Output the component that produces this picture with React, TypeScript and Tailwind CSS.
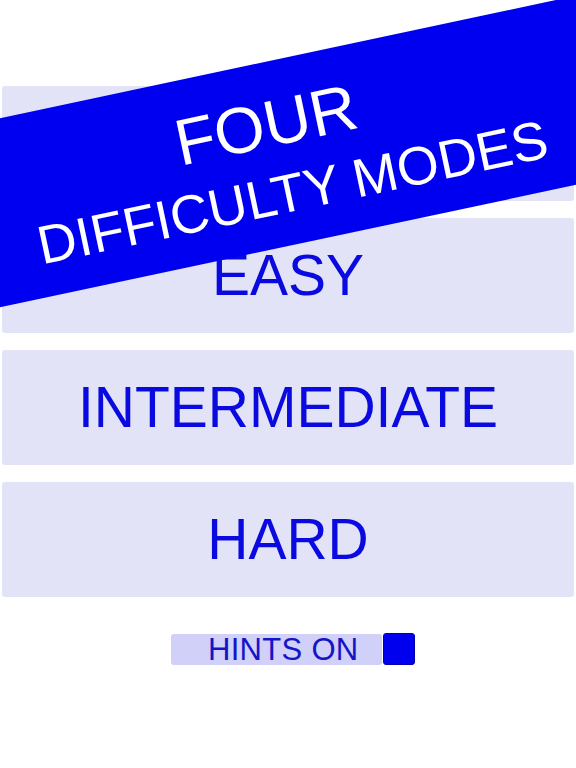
import { useState } from "react";

const modes = ["RELAXED", "EASY", "INTERMEDIATE", "HARD"];

export default function App() {
    const [hints, setHints] = useState(true);

    return (
        <div className="relative w-full h-screen overflow-hidden bg-white font-['Liberation_Sans',Arial,sans-serif]">
            <div className="flex flex-col gap-[17px] px-[2px] pt-[86px]">
                {modes.map((mode) => (
                    <button
                        key={mode}
                        className="h-[115px] w-full rounded-[3px] bg-[#e3e3f8] text-[57px] leading-none text-[#0a0ae0] flex items-center justify-center"
                    >
                        {mode}
                    </button>
                ))}
            </div>

            <div className="flex justify-center pl-[10px] mt-[36px]">
                <button onClick={() => setHints(!hints)} className="flex items-center">
                    <span className="h-[31px] w-[211px] rounded-[3px] bg-[#d0d0f8] pl-[37px] text-left text-[31px] leading-[31px] tracking-[0.3px] text-[#1515c8]">
                        HINTS {hints ? "ON" : "OFF"}
                    </span>
                    <span className={`ml-px h-[32px] w-[32px] rounded-[3px] border border-[#0000b0] ${hints ? "bg-[#0000ee]" : "bg-white"}`} />
                </button>
            </div>

            {/* diagonal promo ribbon across the top */}
            <div className="absolute left-[-62px] top-[59px] h-[185px] w-[700px] rotate-[-12deg] bg-[#0000f0] flex flex-col items-center justify-center text-white">
                <div className="-translate-x-[4px] translate-y-[2px] flex flex-col items-center gap-[12px]">
                    <span className="mr-[24px] text-[65px] leading-none">FOUR</span>
                    <span className="text-[54px] leading-none">DIFFICULTY MODES</span>
                </div>
            </div>
        </div>
    );
}
